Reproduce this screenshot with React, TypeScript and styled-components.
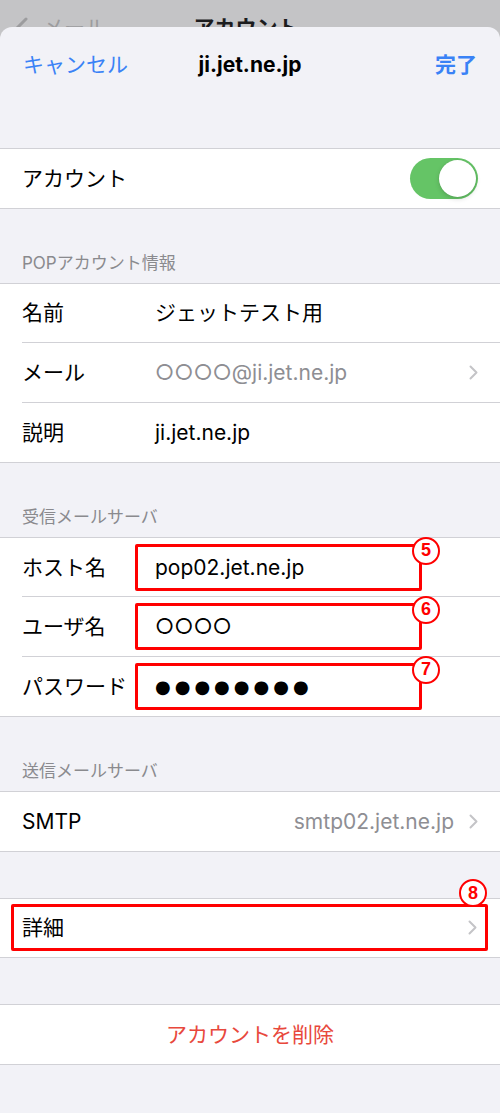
import styled, { createGlobalStyle } from 'styled-components'

const GlobalStyle = createGlobalStyle`
  body {
    margin: 0;
    background: #c4c4c6;
    font-family: Inter, 'Noto Sans CJK JP', sans-serif;
    line-height: 1.2;
    -webkit-font-smoothing: antialiased;
  }
`

const RED = '#ff0000'

function Chevron({ color = '#c4c4c7' }: { color?: string }) {
  return (
    <svg width='9' height='15' viewBox='0 0 9 15'>
      <path
        d='M1.5 1.5 L7.5 7.5 L1.5 13.5'
        fill='none'
        stroke={color}
        strokeWidth='2'
        strokeLinecap='round'
        strokeLinejoin='round'
      />
    </svg>
  )
}

function BackChevron() {
  return (
    <svg width='13' height='22' viewBox='0 0 13 22'>
      <path
        d='M11 2 L2 11 L11 20'
        fill='none'
        stroke='#9c9c9e'
        strokeWidth='3'
        strokeLinecap='round'
        strokeLinejoin='round'
      />
    </svg>
  )
}

export default function App() {
  return (
    <>
      <GlobalStyle />
      <Backdrop>
        <BackLink>
          <BackChevron />
          <span>メール</span>
        </BackLink>
        <BackTitle>アカウント</BackTitle>
      </Backdrop>

      <Sheet>
        <NavBar>
          <NavButton>キャンセル</NavButton>
          <NavTitle>ji.jet.ne.jp</NavTitle>
          <NavButton $bold $end>
            完了
          </NavButton>
        </NavBar>

        <Gap />
        <Group>
          <Row>
            <RowBody>
              <Label>アカウント</Label>
              <Toggle>
                <Knob />
              </Toggle>
            </RowBody>
          </Row>
        </Group>

        <SectionHeader>POPアカウント情報</SectionHeader>
        <Group>
          <Row>
            <RowBody>
              <Label $fixed>名前</Label>
              <Value>ジェットテスト用</Value>
            </RowBody>
          </Row>
          <Row>
            <RowBody $divided>
              <Label $fixed>メール</Label>
              <Value $muted>○○○○@ji.jet.ne.jp</Value>
              <Chevron />
            </RowBody>
          </Row>
          <Row>
            <RowBody $divided>
              <Label $fixed>説明</Label>
              <Value>ji.jet.ne.jp</Value>
            </RowBody>
          </Row>
        </Group>

        <SectionHeader>受信メールサーバ</SectionHeader>
        <Group>
          <Row>
            <RowBody>
              <Label $fixed>ホスト名</Label>
              <Value $marked>
                pop02.jet.ne.jp
                <Badge>5</Badge>
              </Value>
            </RowBody>
          </Row>
          <Row>
            <RowBody $divided>
              <Label $fixed>ユーザ名</Label>
              <Value $marked>
                ○○○○
                <Badge>6</Badge>
              </Value>
            </RowBody>
          </Row>
          <Row>
            <RowBody $divided>
              <Label $fixed>パスワード</Label>
              <Value $marked>
                <Dots>●●●●●●●●</Dots>
                <Badge>7</Badge>
              </Value>
            </RowBody>
          </Row>
        </Group>

        <SectionHeader>送信メールサーバ</SectionHeader>
        <Group>
          <Row>
            <RowBody>
              <Label>SMTP</Label>
              <TrailingValue>smtp02.jet.ne.jp</TrailingValue>
              <Chevron />
            </RowBody>
          </Row>
        </Group>

        <Gap />
        <Group>
          <MarkedRow>
            <MarkedBox>
              <Label>詳細</Label>
              <Chevron />
              <Badge $corner>8</Badge>
            </MarkedBox>
          </MarkedRow>
        </Group>

        <Gap />
        <Group>
          <DeleteRow>アカウントを削除</DeleteRow>
        </Group>
      </Sheet>
    </>
  )
}

const Backdrop = styled.div`
  height: 27px;
  overflow: hidden;
  display: flex;
  align-items: flex-start;
  padding: 16px 15px 0;
  box-sizing: border-box;
  position: relative;
  font-size: 21px;
  line-height: 24px;
`

const BackLink = styled.div`
  display: flex;
  align-items: center;
  gap: 15px;
  color: #9c9c9e;
`

const BackTitle = styled.div`
  position: absolute;
  left: 0;
  right: 0;
  top: 16px;
  text-align: center;
  font-weight: 700;
  color: #1c1c1e;
  padding-right: 8px;
`

const Sheet = styled.div`
  background: #f2f2f7;
  border-radius: 12px 12px 0 0;
  min-height: 1086px;
  overflow: hidden;
`

const NavBar = styled.div`
  height: 75px;
  display: grid;
  grid-template-columns: 1fr auto 1fr;
  align-items: center;
  padding: 0 23px;
  font-size: 21px;
`

const NavButton = styled.div<{ $bold?: boolean; $end?: boolean }>`
  color: #3a82f6;
  font-weight: ${({ $bold }) => ($bold ? 700 : 400)};
  justify-self: ${({ $end }) => ($end ? 'end' : 'start')};
`

const NavTitle = styled.div`
  font-weight: 700;
  color: #000;
`

const Gap = styled.div`
  height: 46px;
`

const SectionHeader = styled.div`
  height: 74px;
  box-sizing: border-box;
  display: flex;
  align-items: flex-end;
  padding: 0 22px 10px;
  font-size: 17px;
  line-height: 20px;
  color: #8a8a8e;
`

const Group = styled.div`
  background: #fff;
  border-top: 1px solid #d1d1d6;
  border-bottom: 1px solid #d1d1d6;
`

const Row = styled.div`
  padding-left: 22px;
`

const RowBody = styled.div<{ $divided?: boolean }>`
  height: 58.7px;
  display: flex;
  align-items: center;
  padding-right: 22px;
  border-top: ${({ $divided }) => ($divided ? '1px solid #d1d1d6' : 'none')};
  font-size: 21px;
  color: #000;
`

const Label = styled.div<{ $fixed?: boolean }>`
  flex: ${({ $fixed }) => ($fixed ? '0 0 113px' : '1')};
  white-space: nowrap;
`

const Value = styled.div<{ $muted?: boolean; $marked?: boolean }>`
  position: relative;
  box-sizing: border-box;
  display: flex;
  align-items: center;
  height: 47px;
  padding-left: 17px;
  border: 3px solid ${({ $marked }) => ($marked ? RED : 'transparent')};
  border-radius: 2px;
  flex: ${({ $marked }) => ($marked ? '0 0 287px' : '1')};
  color: ${({ $muted }) => ($muted ? '#8e8e93' : '#000')};
  white-space: nowrap;
`

const Dots = styled.span`
  font-family: 'DejaVu Sans', sans-serif;
  font-size: 18px;
  letter-spacing: 4px;
`

const TrailingValue = styled.div`
  color: #8e8e93;
  margin-right: 15px;
`

const Badge = styled.div<{ $corner?: boolean }>`
  position: absolute;
  top: ${({ $corner }) => ($corner ? '-28px' : '-10px')};
  right: ${({ $corner }) => ($corner ? '-2px' : '-21px')};
  width: 28px;
  height: 28px;
  box-sizing: border-box;
  border: 2px solid ${RED};
  border-radius: 50%;
  background: #fff;
  color: ${RED};
  font-family: 'Liberation Sans', Arial, sans-serif;
  font-weight: 700;
  font-size: 18px;
  display: flex;
  align-items: center;
  justify-content: center;
`

const Toggle = styled.div`
  width: 68px;
  height: 41.5px;
  border-radius: 21px;
  background: #65c466;
  display: flex;
  align-items: center;
  justify-content: flex-end;
  padding: 0 2px;
  box-sizing: border-box;
`

const Knob = styled.div`
  width: 37px;
  height: 37px;
  border-radius: 50%;
  background: #fff;
  box-shadow: 0 2px 5px rgba(0, 0, 0, 0.15), 0 0 0 0.5px rgba(0, 0, 0, 0.05);
`

const MarkedRow = styled.div`
  height: 58.7px;
  display: flex;
  align-items: center;
  padding: 0 12px 0 11px;
  font-size: 21px;
`

const MarkedBox = styled.div`
  position: relative;
  flex: 1;
  height: 47px;
  box-sizing: border-box;
  display: flex;
  align-items: center;
  padding: 0 8px;
  border: 3px solid ${RED};
  border-radius: 2px;
`

const DeleteRow = styled.div`
  height: 58.7px;
  display: flex;
  align-items: center;
  justify-content: center;
  font-size: 21px;
  color: #e8483c;
`
